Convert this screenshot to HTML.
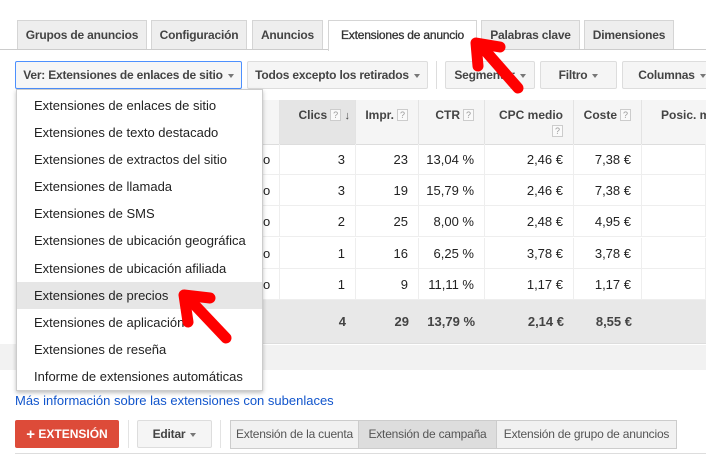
<!DOCTYPE html>
<html><head><meta charset="utf-8"><style>
*{box-sizing:border-box;margin:0;padding:0}
body{width:706px;height:456px;overflow:hidden;background:#fff;font-family:"Liberation Sans",Arial,sans-serif;position:relative;font-size:13px;color:#222}
.a{position:absolute}
.tabbar{position:absolute;left:0;top:0;width:706px;height:50px;background:#fff;border-bottom:1px solid #ccc}
.tab{position:absolute;top:20px;height:29px;background:#eee;border:1px solid #d5d5d5;border-bottom:none;font-size:12px;font-weight:bold;color:#444;text-align:center;line-height:28px;letter-spacing:-.2px}
.tab.act{background:#fff;height:31px;color:#333;font-weight:normal;-webkit-text-stroke:.3px #333}
.btn{position:absolute;top:61px;height:28px;background:#f5f5f5;border:1px solid #ddd;border-radius:2px;font-size:12px;font-weight:bold;color:#444;line-height:26px;text-align:center;letter-spacing:-.2px}
.car{display:inline-block;width:0;height:0;border-left:3.5px solid transparent;border-right:3.5px solid transparent;border-top:4px solid #777;vertical-align:middle;margin-left:5px}
.hd{position:absolute;top:100px;height:44px;background:#f5f5f5;border-right:1px solid #e3e3e3;font-size:12px;font-weight:bold;color:#444;text-align:right;padding:8px 10px 0 0}
.q{display:inline-block;width:11px;height:12px;border:1px solid #ccc;font-size:9px;color:#999;font-weight:normal;text-align:center;line-height:10px;margin-left:3px;vertical-align:1px;background:#fafafa}
.cell{position:absolute;font-size:13px;text-align:right;height:31px;line-height:31px;border-right:1px solid #eee;border-bottom:1px solid #eee;padding-right:10px}
.tot{font-weight:bold;color:#444;border:none}
.menu{position:absolute;left:16px;top:89px;width:247px;height:302px;background:#fff;border:1px solid #ccc;box-shadow:0 2px 4px rgba(0,0,0,.25)}
.mi{height:27.1px;line-height:27px;padding-left:17px;font-size:13px;color:#222}
.mi.h{background:#e6e6e6}
.seg{position:absolute;top:420px;height:29px;border:1px solid #ccc;background:#f1f1f1;font-size:12px;color:#555;line-height:27px;text-align:center}
</style></head><body>
<div class="tabbar"></div>
<div class="tab" style="left:17px;width:130px">Grupos de anuncios</div>
<div class="tab" style="left:151px;width:96px">Configuración</div>
<div class="tab" style="left:252px;width:71px">Anuncios</div>
<div class="tab act" style="left:328px;width:149px;top:20px">Extensiones de anuncio</div>
<div class="tab" style="left:481px;width:99px">Palabras clave</div>
<div class="tab" style="left:584px;width:90px">Dimensiones</div>

<div class="btn" style="left:15px;width:227px;border-color:#4d90fe;background:#f6f6f6">Ver: Extensiones de enlaces de sitio<span class="car"></span></div>
<div class="btn" style="left:247px;width:181px">Todos excepto los retirados<span class="car"></span></div>
<div class="a" style="left:436px;top:61px;width:1px;height:28px;background:#ddd"></div>
<div class="btn" style="left:445px;width:90px">Segmentar<span class="car"></span></div>
<div class="btn" style="left:540px;width:77px">Filtro<span class="car"></span></div>
<div class="btn" style="left:622px;width:100px">Columnas<span class="car"></span></div>

<div class="hd" style="left:250px;width:30px"></div>
<div class="hd" style="left:280px;width:76px;background:#e5e5e5;padding-right:5px">Clics<span class="q">?</span> <span style="font-size:11px">&#8595;</span></div>
<div class="hd" style="left:356px;width:63px">Impr.<span class="q">?</span></div>
<div class="hd" style="left:419px;width:66px">CTR<span class="q">?</span></div>
<div class="hd" style="left:485px;width:89px">CPC medio<br><span class="q" style="margin-top:3px">?</span></div>
<div class="hd" style="left:574px;width:68px">Coste<span class="q">?</span></div>
<div class="hd" style="left:642px;width:80px;text-align:left;padding-left:19px;border:none">Posic. m</div>
<div class="a" style="left:250px;top:144px;width:456px;height:1px;background:#ddd"></div>

<div class="a" style="left:250px;top:300px;width:456px;height:44px;background:#e8e8e8;border-bottom:1px solid #ddd"></div>
<div class="a" style="left:250px;top:345px;width:456px;height:25px;background:#f2f2f2"></div>
<div class="a" style="left:0;top:344px;width:250px;height:26px;background:#f2f2f2"></div>
<div id="rows"></div>

<div class="menu">
<div style="height:2px"></div>
<div class="mi">Extensiones de enlaces de sitio</div>
<div class="mi">Extensiones de texto destacado</div>
<div class="mi">Extensiones de extractos del sitio</div>
<div class="mi">Extensiones de llamada</div>
<div class="mi">Extensiones de SMS</div>
<div class="mi">Extensiones de ubicación geográfica</div>
<div class="mi">Extensiones de ubicación afiliada</div>
<div class="mi h">Extensiones de precios</div>
<div class="mi">Extensiones de aplicación</div>
<div class="mi">Extensiones de reseña</div>
<div class="mi">Informe de extensiones automáticas</div>
</div>

<div class="a" style="left:15px;top:393px;font-size:13px;color:#1155cc">Más información sobre las extensiones con subenlaces</div>

<div class="a" style="left:15px;top:420px;width:104px;height:28px;background:#dd4b39;border-radius:2px;color:#fff;font-size:12px;font-weight:bold;line-height:28px;text-align:center"><span style="font-size:15px;vertical-align:-1px">+</span> EXTENSIÓN</div>
<div class="a" style="left:128px;top:420px;width:1px;height:28px;background:#e3e3e3"></div>
<div class="btn" style="left:137px;top:420px;width:75px">Editar<span class="car"></span></div>
<div class="a" style="left:220px;top:420px;width:1px;height:28px;background:#e3e3e3"></div>
<div class="seg" style="left:230px;width:129px;letter-spacing:-.2px">Extensión de la cuenta</div>
<div class="seg" style="left:358px;width:139px;background:#ddd;letter-spacing:-.2px">Extensión de campaña</div>
<div class="seg" style="left:496px;width:181px;letter-spacing:-.2px">Extensión de grupo de anuncios</div>
<div class="a" style="left:15px;top:453px;width:691px;height:1px;background:#ddd"></div>

<svg class="a" style="left:0;top:0" width="706" height="456">
<g stroke="#f00" stroke-width="11" stroke-linecap="round" stroke-linejoin="round" fill="none">
<path d="M518 88 L482 47"/><path d="M500 47 L476 43 L478 66"/>
<path d="M226 338 L190 300"/><path d="M210 298 L184 295 L188 322"/>
</g></svg>

<script>
var dat=[["3","23","13,04 %","2,46 €","7,38 €"],["3","19","15,79 %","2,46 €","7,38 €"],["2","25","8,00 %","2,48 €","4,95 €"],["1","16","6,25 %","3,78 €","3,78 €"],["1","9","11,11 %","1,17 €","1,17 €"],["4","29","13,79 %","2,14 €","8,55 €"]];
var cols=[[280,76],[356,63],[419,66],[485,89],[574,68],[642,64]];
var out="";
for(var r=0;r<6;r++){var y=r<5?Math.round(144+r*31.2):306;var t=r==5?" tot":"";
if(r<5)out+='<div class="cell" style="left:250px;top:'+y+'px;width:30px;text-align:left;padding-left:13px">o</div>';
for(var c=0;c<6;c++){out+='<div class="cell'+t+'" style="left:'+cols[c][0]+'px;top:'+y+'px;width:'+cols[c][1]+'px">'+(c<5?dat[r][c]:'')+'</div>';}}
document.getElementById("rows").innerHTML=out;
</script>
</body></html>
